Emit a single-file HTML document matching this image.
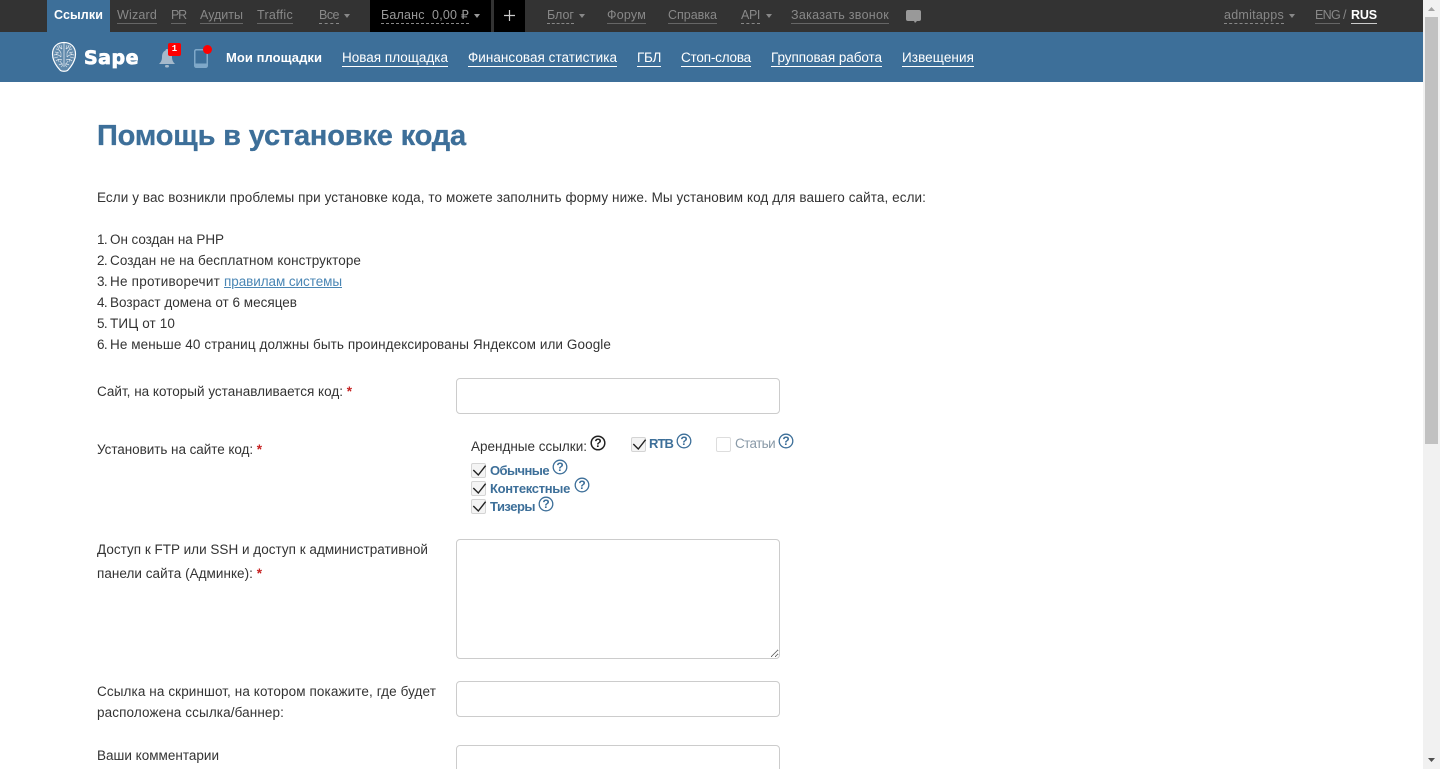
<!DOCTYPE html>
<html lang="ru"><head><meta charset="utf-8"><title>Помощь в установке кода</title>
<style>
html,body{margin:0;padding:0;width:1440px;height:769px;overflow:hidden;background:#fff}
body{font-family:"Liberation Sans",Arial,sans-serif;position:relative;color:#333}
a{text-decoration:none;color:inherit}
.t,.n,.b,.d{position:absolute;white-space:nowrap;display:block}
.t{font-size:13.5px;line-height:20px;height:20px;color:#333}
.bar{position:absolute;left:0;top:0;width:1423px;height:32px;background:#333}
.blue{position:absolute;left:0;top:32px;width:1423px;height:50px;background:#3d6f99}
.n{font-size:12.5px;line-height:16px;top:7px;height:16px;color:#888;border-bottom:1px solid #666}
.d{font-size:12.5px;line-height:16px;top:7px;height:16px;color:#888;border-bottom:1px dashed #888}
.b{font-size:13.5px;line-height:20px;top:48px;height:18px;color:#fff;border-bottom:1px solid #fff}
.c{position:absolute;width:0;height:0;border:3px solid transparent;border-top:4px solid #888;border-bottom:0}
.box{position:absolute;background:#000;top:0;height:32px}
input,textarea{position:absolute;box-sizing:border-box;margin:0;padding:0;background:#fff;border:1px solid #ccc;border-radius:4px;left:456px;width:324px;outline:0}
.cb{position:absolute;box-sizing:border-box;width:15px;height:15px;border:1px solid #d4d4d4;border-radius:2px;background:#f4f4f4}
.cb svg{position:absolute;left:0;top:-1px;overflow:visible}
.q{position:absolute;width:16px;height:16px}
.s{font-weight:bold;color:#3d6f99;font-size:13px}
i{font-style:normal;font-weight:bold;color:#c62222}
</style></head><body>

<div class="bar"></div>
<div style="position:absolute;left:47px;top:0;width:63px;height:32px;background:#3d6f99"></div>
<a class="t" style="left:54px;top:5px;width:49px;color:#fff;font-weight:bold;font-size:12.5px">Ссылки</a>
<a class="n" style="left:117px;width:40px">Wizard</a>
<a class="n" style="left:171px;width:15px">PR</a>
<a class="n" style="left:200px;width:43px">Аудиты</a>
<a class="n" style="left:257px;width:36px">Traffic</a>
<a class="d" style="left:319px;width:20px">Все</a><span class="c" style="left:344px;top:14px"></span>
<div class="box" style="left:370px;width:121px"></div>
<a class="d" style="left:381px;width:88px;color:#999">Баланс&nbsp; 0,00 ₽</a><span class="c" style="left:474px;top:14px;border-top-color:#999"></span>
<div class="box" style="left:494px;width:31px"></div>
<svg style="position:absolute;left:504px;top:10px" width="11" height="11"><path d="M5.5 0v11M0 5.5h11" stroke="#ccc" stroke-width="1.200"/></svg>
<a class="d" style="left:547px;width:27px">Блог</a><span class="c" style="left:579px;top:14px"></span>
<a class="n" style="left:607px;width:39px">Форум</a>
<a class="n" style="left:668px;width:49px">Справка</a>
<a class="d" style="left:741px;width:19px">API</a><span class="c" style="left:766px;top:14px"></span>
<a class="n" style="left:791px;width:98px">Заказать звонок</a>
<svg style="position:absolute;left:906px;top:10px" width="16" height="13"><path d="M2 0h11a2 2 0 0 1 2 2v7a2 2 0 0 1-2 2h-2l-2 2-1-2H2a2 2 0 0 1-2-2V2a2 2 0 0 1 2-2z" fill="#999"/></svg>
<a class="d" style="left:1224px;width:60px">admitapps</a><span class="c" style="left:1289px;top:14px"></span>
<a class="n" style="left:1315px;width:25px">ENG</a>
<span class="t" style="left:1343px;top:5px;width:4px;color:#888;font-size:12.5px">/</span>
<a class="n" style="left:1351px;width:26px;color:#fff;font-weight:bold;border-color:#ccc">RUS</a>

<div class="blue"></div>
<svg style="position:absolute;left:51px;top:41px" width="26" height="32" viewBox="0 0 26 32" fill="none" stroke="#fff">
<path d="M13 1.500C6 1.500 1.500 6 1.500 13c0 5 2 9 5 13l3 3.500c1.500 1 5.500 1 7 0l3-3.500c3-4 5-8 5-13C24.500 6 20 1.500 13 1.500z" stroke-width="1.200" fill="#fff" fill-opacity=".18"/>
<path d="M13 2v24M5 8c3 0 4 2 5 4M21 8c-3 0-4 2-5 4M3 14c3-1 5 0 7 2M23 14c-3-1-5 0-7 2M5 20c2-2 4-2 6-1M21 20c-2-2-4-2-6-1M8 4c0 2 1 3 3 4M18 4c0 2-1 3-3 4M8 24c1-1 2-1 4-1M18 24c-1-1-2-1-4-1" stroke-width=".8" opacity=".8"/>
<path d="M4 11l4 1M22 11l-4 1M3 17l4-1M23 17l-4-1M7 18l1 3M19 18l-1 3M10 12v4M16 12v4M6 5l2 3M20 5l-2 3M10 4l1 4M16 4l-1 4M5 14l2-3M21 14l-2-3M9 20l2 3M17 20l-2 3M10 26l2-2M16 26l-2-2" stroke-width=".7" opacity=".65"/></svg>
<a class="t" style="left:84px;top:46px;width:55px;height:24px;line-height:24px;font-family:'DejaVu Sans','Liberation Sans',sans-serif;font-weight:bold;font-size:19px;color:#fff;-webkit-text-stroke:.8px #fff">Sape</a>
<svg style="position:absolute;left:159px;top:49px" width="16" height="19" viewBox="0 0 16 19"><path d="M8 0c1 0 1.500.7 1.500 1.500C12 2.500 13 5 13 8c0 3 1 5 3 7H0c2-2 3-4 3-7 0-3 1-5.500 3.500-6.500C6.500.7 7 0 8 0z" fill="#a5b9cb"/><rect x="6" y="16" width="4" height="2.500" rx="1.200" fill="#a5b9cb"/></svg>
<div style="position:absolute;left:168px;top:43px;width:13px;height:13px;background:#f00;border-radius:2px;color:#fff;font:bold 9px/13px 'Liberation Mono',monospace;text-align:center">1</div>
<svg style="position:absolute;left:194px;top:49px" width="14" height="19" viewBox="0 0 14 19"><rect x=".75" y=".75" width="12.500" height="17.500" rx="1.500" fill="none" stroke="#7fa8c9" stroke-width="1.500"/><rect x="1" y="14.500" width="12" height="3.500" fill="#7fa8c9"/></svg>
<div style="position:absolute;left:203px;top:45px;width:9px;height:9px;background:#f00;border-radius:50%"></div>
<a class="t" style="left:226px;top:48px;width:96px;color:#fff;font-weight:bold;font-size:13px">Мои площадки</a>
<a class="b" style="left:342px;width:106px">Новая площадка</a>
<a class="b" style="left:468px;width:149px">Финансовая статистика</a>
<a class="b" style="left:637px;width:24px">ГБЛ</a>
<a class="b" style="left:681px;width:70px">Стоп-слова</a>
<a class="b" style="left:771px;width:111px">Групповая работа</a>
<a class="b" style="left:902px;width:72px">Извещения</a>

<h1 class="t" style="margin:0;left:97px;top:118px;width:369px;height:36px;line-height:36px;font-size:29px;font-weight:bold;color:#3d6f99;-webkit-text-stroke:.3px #3d6f99">Помощь в установке кода</h1>

<p class="t" style="margin:0;left:97px;top:188px;width:829px">Если у вас возникли проблемы при установке кода, то можете заполнить форму ниже. Мы установим код для вашего сайта, если:</p>
<div class="t" style="left:97px;top:230px;width:10px">1.</div><div class="t" style="left:110px;top:230px;width:114px">Он создан на PHP</div>
<div class="t" style="left:97px;top:251px;width:10px">2.</div><div class="t" style="left:110px;top:251px;width:251px">Создан не на бесплатном конструкторе</div>
<div class="t" style="left:97px;top:272px;width:10px">3.</div><div class="t" style="left:110px;top:272px;width:110px">Не противоречит</div>
<a class="t" style="left:224px;top:272px;width:118px;color:#4a86b4;text-decoration:underline">правилам системы</a>
<div class="t" style="left:97px;top:293px;width:10px">4.</div><div class="t" style="left:110px;top:293px;width:187px">Возраст домена от 6 месяцев</div>
<div class="t" style="left:97px;top:314px;width:10px">5.</div><div class="t" style="left:110px;top:314px;width:65px">ТИЦ от 10</div>
<div class="t" style="left:97px;top:335px;width:10px">6.</div><div class="t" style="left:110px;top:335px;width:501px">Не меньше 40 страниц должны быть проиндексированы Яндексом или Google</div>

<label class="t" style="left:97px;top:382px;width:255px">Сайт, на который устанавливается код: <i>*</i></label>
<input type="text" style="top:378px;height:36px">

<label class="t" style="left:97px;top:440px;width:165px">Установить на сайте код: <i>*</i></label>
<span class="t" style="left:471px;top:437px;width:116px">Арендные ссылки:</span>
<svg class="q" style="left:590px;top:435px" viewBox="0 0 16 16"><circle cx="8" cy="8" r="6.800" fill="none" stroke="#222" stroke-width="1.500"/><text x="8" y="12.200" text-anchor="middle" font-family="Liberation Sans" font-weight="bold" font-size="12" fill="#222">?</text></svg>

<span class="cb" style="left:631px;top:437px"><svg width="15" height="15"><path d="M1.300 7l5 5 7.300-9.300" fill="none" stroke="#222" stroke-width="1.400"/></svg></span>
<span class="t s" style="left:649px;top:434px;width:24px">RTB</span>
<svg class="q" style="left:676px;top:433px" viewBox="0 0 16 16"><circle cx="8" cy="8" r="6.800" fill="none" stroke="#3d6f99" stroke-width="1.300"/><text x="8" y="12.200" text-anchor="middle" font-family="Liberation Sans" font-weight="bold" font-size="12" fill="#3d6f99">?</text></svg>
<span class="cb" style="left:716px;top:437px;background:#fff;border-color:#ddd"></span>
<span class="t" style="left:735px;top:434px;width:40px;color:#8a9aa8">Статьи</span>
<svg class="q" style="left:778px;top:433px" viewBox="0 0 16 16"><circle cx="8" cy="8" r="6.800" fill="none" stroke="#3d6f99" stroke-width="1.300"/><text x="8" y="12.200" text-anchor="middle" font-family="Liberation Sans" font-weight="bold" font-size="12" fill="#3d6f99">?</text></svg>

<span class="cb" style="left:471px;top:463px"><svg width="15" height="15"><path d="M1.300 7l5 5 7.300-9.300" fill="none" stroke="#222" stroke-width="1.400"/></svg></span>
<span class="t s" style="left:490px;top:461px;width:59px">Обычные</span>
<svg class="q" style="left:552px;top:459px" viewBox="0 0 16 16"><circle cx="8" cy="8" r="6.800" fill="none" stroke="#3d6f99" stroke-width="1.300"/><text x="8" y="12.200" text-anchor="middle" font-family="Liberation Sans" font-weight="bold" font-size="12" fill="#3d6f99">?</text></svg>
<span class="cb" style="left:471px;top:481px"><svg width="15" height="15"><path d="M1.300 7l5 5 7.300-9.300" fill="none" stroke="#222" stroke-width="1.400"/></svg></span>
<span class="t s" style="left:490px;top:479px;width:80px">Контекстные</span>
<svg class="q" style="left:574px;top:477px" viewBox="0 0 16 16"><circle cx="8" cy="8" r="6.800" fill="none" stroke="#3d6f99" stroke-width="1.300"/><text x="8" y="12.200" text-anchor="middle" font-family="Liberation Sans" font-weight="bold" font-size="12" fill="#3d6f99">?</text></svg>
<span class="cb" style="left:471px;top:499px"><svg width="15" height="15"><path d="M1.300 7l5 5 7.300-9.300" fill="none" stroke="#222" stroke-width="1.400"/></svg></span>
<span class="t s" style="left:490px;top:497px;width:45px">Тизеры</span>
<svg class="q" style="left:538px;top:496px" viewBox="0 0 16 16"><circle cx="8" cy="8" r="6.800" fill="none" stroke="#3d6f99" stroke-width="1.300"/><text x="8" y="12.200" text-anchor="middle" font-family="Liberation Sans" font-weight="bold" font-size="12" fill="#3d6f99">?</text></svg>

<label class="t" style="left:97px;top:540px;width:331px">Доступ к FTP или SSH и доступ к административной</label>
<label class="t" style="left:97px;top:564px;width:165px">панели сайта (Админке): <i>*</i></label>
<textarea style="top:539px;height:120px"></textarea>

<label class="t" style="left:97px;top:682px;width:339px">Ссылка на скриншот, на котором покажите, где будет</label>
<label class="t" style="left:97px;top:703px;width:187px">расположена ссылка/баннер:</label>
<input type="text" style="top:681px;height:36px">

<label class="t" style="left:97px;top:746px;width:122px">Ваши комментарии</label>
<input type="text" style="top:745px;height:60px">

<div style="position:absolute;left:1423px;top:0;width:17px;height:769px;background:#f1f1f1"></div>
<div style="position:absolute;left:1425px;top:17px;width:13px;height:427px;background:#c1c1c1"></div>
<svg style="position:absolute;left:1423px;top:0" width="17" height="769"><path d="M5 11l3.500-4 3.500 4z" fill="#a3a3a3"/><path d="M5 758h7l-3.500 4z" fill="#505050"/></svg>

<script>
document.querySelectorAll('.t,.n,.d,.b').forEach(function(e){
  var w=parseFloat(e.style.width);if(!w)return;
  var r=document.createRange();r.selectNodeContents(e);
  var a=r.getBoundingClientRect().width,n=e.textContent.length;
  if(n>1)e.style.letterSpacing=((w-a)/n)+'px';
});
</script>
</body></html>
